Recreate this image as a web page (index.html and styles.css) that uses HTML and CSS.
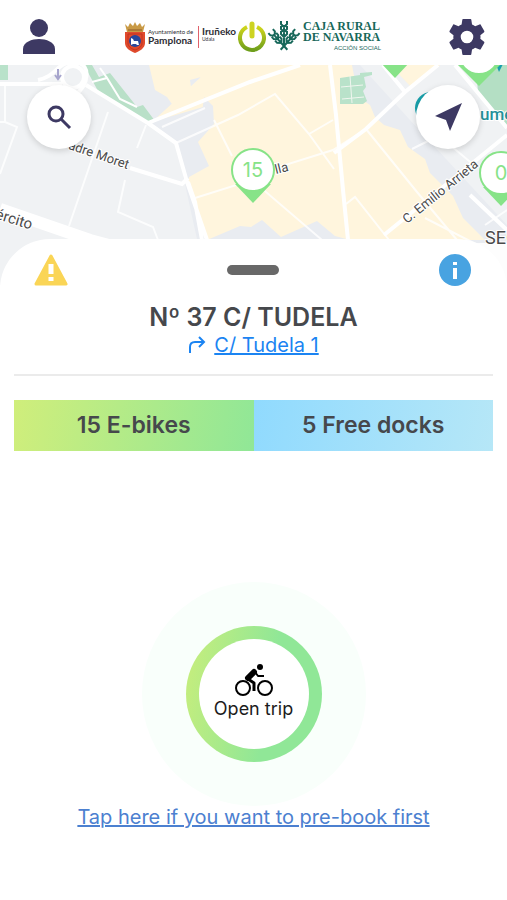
FILE: index.html
```html
<!DOCTYPE html>
<html lang="en">

<head>
    <meta charset="UTF-8">
    <meta name="viewport" content="width=device-width, initial-scale=1.0">
    <title>Station 37 - C/ Tudela</title>
    <link rel="stylesheet" href="styles.css">
</head>

<body>
    <header>
        <button class="icon-btn" aria-label="Profile">
            <svg width="34" height="36" viewBox="0 0 34 36" fill="currentColor">
                <circle cx="17" cy="9" r="9" />
                <path d="M1 35V30C1 23 10 20 17 20S33 23 33 30V35Z" />
            </svg>
        </button>

        <div class="logos">
            <svg class="crest" width="22" height="32" viewBox="0 0 22 32">
                <path d="M1 3L4 6L6 2L9 5L11 1L13 5L16 2L18 6L21 3L19 11H3Z" fill="#c99a45" />
                <path d="M4 9H18" stroke="#8d5a2b" stroke-width="1" />
                <path d="M1 11H21V22C21 27 16 30 11 32C6 30 1 27 1 22Z" fill="#e04a2c" />
                <path d="M4 13H18V22C18 26 14 28 11 29C8 28 4 26 4 22Z" fill="none" stroke="#c2331f" stroke-width="1" />
                <circle cx="11" cy="20" r="6" fill="#27479b" />
                <path d="M7 17L9 18L10 20L14 20L15 24H13L12 23H9L7 24Z" fill="#fff" />
            </svg>
            <div class="city">
                <span>Ayuntamiento de</span>
                <strong>Pamplona</strong>
            </div>
            <div class="city city-eu">
                <strong>Iruñeko</strong>
                <span>Udala</span>
            </div>
            <svg class="power" width="28" height="32" viewBox="0 0 28 32">
                <defs>
                    <linearGradient id="power" x1="0" y1="0" x2="0" y2="1">
                        <stop offset="0" stop-color="#cfd51c" />
                        <stop offset="1" stop-color="#6f9f1c" />
                    </linearGradient>
                </defs>
                <path d="M9 6A12 12 0 1 0 19 6" fill="none" stroke="url(#power)" stroke-width="4" />
                <path d="M14 3V15" stroke="#cdd322" stroke-width="5" stroke-linecap="round" />
            </svg>
            <svg class="wheat" width="28" height="26" viewBox="0 0 28 26" fill="none" stroke="#17685a">
                <defs>
                    <path id="ear" d="M14 4V25M11 0V3L14 6L17 3V0M11 5V8L14 11L17 8V5M11 10V13L14 16L17 13V10" />
                </defs>
                <use href="#ear" stroke-width="2" />
                <use href="#ear" stroke-width="2" transform="rotate(-42 14 25) translate(0 5)" />
                <use href="#ear" stroke-width="2" transform="rotate(42 14 25) translate(0 5)" />
            </svg>
            <div class="bank">
                <strong>CAJA RURAL</strong>
                <strong>DE NAVARRA</strong>
                <span>ACCIÓN SOCIAL</span>
            </div>
        </div>

        <button class="icon-btn" aria-label="Settings">
            <svg width="36" height="36" viewBox="2 2 20 20" fill="currentColor">
                <path d="M19.4 13c0-.3.1-.6.1-1s0-.7-.1-1l2.1-1.7c.2-.2.2-.4.1-.6l-2-3.5c-.1-.2-.4-.3-.6-.2l-2.5 1c-.5-.4-1.1-.7-1.7-1l-.4-2.6c0-.2-.2-.4-.5-.4h-4c-.2 0-.5.2-.5.4L9 5c-.6.3-1.2.6-1.7 1L4.9 5c-.2-.1-.5 0-.6.2l-2 3.500c-.1.2-.1.5.1.6L4.500 11c0 .3-.1.7-.1 1s0 .7.1 1l-2.100 1.700c-.2.2-.2.4-.1.6l2 3.500c.1.2.4.3.6.2l2.400-1c.5.4 1.100.7 1.700 1l.4 2.600c0 .2.2.4.5.4h4c.2 0 .5-.2.5-.4l.4-2.600c.6-.3 1.200-.6 1.700-1l2.500 1c.2.1.5 0 .6-.2l2-3.500c.1-.2.1-.5-.1-.6zM12 15.500a3.500 3.500 0 1 1 0-7 3.500 3.500 0 0 1 0 7z" />
            </svg>
        </button>
    </header>

    <section class="map">
        <svg class="map-canvas" viewBox="0 65 507 220" preserveAspectRatio="xMidYMin slice">
            <rect y="65" width="507" height="220" fill="#f0f2f4" />
            <path d="M88 65H360L410 120L507 225V285H207L176 143L148 123Z" fill="#e9ecf1" />

            <!-- built-up blocks -->
            <path d="M149 65L155 90L167 97L174 107L186 103L192 94L190 80L201 77L204 97L214 101L300 65ZM153 121L176 140L200 129L204 97L213 106L214 124L198 142L209 166L189 177L188 182L207 240L240 226L251 227L262 220L281 237L317 221L335 236L350 240H485L463 218L453 196L430 173L425 159L408 147L400 130L384 125L375 117L370 105L358 97L352 65H214Z" fill="#fff5dd" />
            <path d="M148 123L176 143L209 128L210 105Z" fill="#e9ecf1" />
            <path d="M390 65L412 88L440 65Z" fill="#fff5dd" />

            <!-- parks -->
            <path d="M0 65H8V80H0Z" fill="#b9e2ca" />
            <path d="M84 65L92 65L99 77L110 73L137 107L143 105L155 121L147 123L113 103L98 91Z" fill="#b9e0c8" />
            <path d="M340 78L360 75V73L372 72V75L364 77L366 87L363 91L367 101L363 104H340Z" fill="#b9e2ca" />
            <path d="M341 87L363 85M342 99L364 97M350 76L352 103" stroke="#f0f6ef" stroke-width="1" />
            <path d="M475 65H507V128L478 91Z" fill="#b4dfc4" />

            <!-- streets -->
            <g fill="none" stroke="#fff" stroke-width="2">
                <path d="M5 85V122L17 127L0 174M0 122L5 122M108 112L69 226M146 125L137 148M125 180L118 212L153 227L158 240" opacity=".8" />
                <path d="M176 143L238 115L275 94L309 134L334 169M214 120L232 156M309 134L333 120M250 176L333 150L366 129M195 198L252 180L322 240M346 204L355 197L389 240M366 129L417 192L457 240M412 149L430 140M450 145L475 166M425 218L507 260M162 127L205 108M485 225L507 210" opacity=".8" />
                <path d="M92 82L107 78L120 99L137 107M107 78L100 68" />
            </g>
            <g fill="none" stroke="#fff" stroke-width="4">
                <path d="M0 84H62M86 85L148 123L176 143L187 182L207 240M148 123L250 82L300 65M130 168L182 184L188 178M188 182L195 202L202 240" />
                <path d="M330 65L336 115L343 190L348 240M334 153L366 129L405 92L438 65M383 65L405 92M455 65L507 128M384 235L507 135M507 230L470 195" />
                <path d="M0 209L90 240L180 264" stroke-width="12" />
                <path d="M38 80C58 76 55 62 76 62C92 65 88 85 76 94" />
                <circle cx="73" cy="77" r="11" />
            </g>
            <path d="M430 243H507V285H430Z" fill="#fdfdfd" />
            <path d="M58 69V78M55 75L58 79L61 75" fill="none" stroke="#a7a5cd" stroke-width="2" />

            <g class="street-names">
                <text x="60" y="146" transform="rotate(19 60 146)">Padre Moret</text>
                <text class="wide" x="-17" y="215" transform="rotate(17 -17 215)">Ejército</text>
                <text x="276" y="174" transform="rotate(-14 276 174)">lla</text>
                <text x="407" y="224" transform="rotate(-39 407 224)">C. Emilio Arrieta</text>
                <text class="district" x="485" y="244">SEGUNDO</text>
                <text class="museum" x="480" y="120">umento</text>
            </g>
            <circle cx="431" cy="108" r="16" fill="#18a0ab" />
            <path d="M495 62H504L499 72Z" fill="#18a0ab" />

            <!-- station pins -->
            <g class="pins">
                <path d="M380 62H410L395 78Z" />
                <path d="M458 65L479 86L500 65Z" />
                <circle cx="479" cy="54" r="20" />
                <path d="M235 184L253 203L271 184Z" />
                <circle cx="253" cy="170" r="21" />
                <text x="253" y="177">15</text>
                <path d="M483 187L501 206L519 187Z" />
                <circle cx="501" cy="173" r="21" />
                <text x="501" y="180">0</text>
            </g>
        </svg>

        <div class="map-actions">
            <button class="round-btn" aria-label="Search">
                <svg width="26" height="26" viewBox="0 0 26 26" fill="none" stroke="currentColor" stroke-width="3">
                    <circle cx="10" cy="10" r="7" />
                    <path d="M15 15L24 24" />
                </svg>
            </button>
            <button class="round-btn" aria-label="My location">
                <svg width="28" height="28" viewBox="0 0 28 28" fill="currentColor">
                    <path d="M28 0L1 13L12 17L16 28Z" />
                </svg>
            </button>
        </div>
    </section>

    <main class="sheet">
        <div class="sheet-top">
            <button class="icon-btn" aria-label="Report a problem">
                <svg width="34" height="32" viewBox="0 0 34 32">
                    <path d="M17 2L32 30H2Z" fill="#fad556" stroke="#fad556" stroke-width="3" stroke-linejoin="round" />
                    <path d="M17 10V20M17 23V27" stroke="#fff" stroke-width="5" />
                </svg>
            </button>
            <div class="handle"></div>
            <button class="icon-btn" aria-label="Station info">
                <svg width="34" height="34" viewBox="0 0 34 34">
                    <circle cx="17" cy="17" r="16" fill="#48a3e1" />
                    <path d="M17 9V12M17 15V26" stroke="#fff" stroke-width="4" />
                </svg>
            </button>
        </div>

        <h1>Nº 37 C/ TUDELA</h1>
        <p class="address">
            <svg width="18" height="18" viewBox="0 0 18 18" fill="none" stroke="#1b84f2" stroke-width="2">
                <path d="M2 17V11Q2 6 7 6H16M11 1L16 6L11 11" />
            </svg>
            <a href="#">C/ Tudela 1</a>
        </p>

        <div class="stats">
            <div class="stat bikes">15 E-bikes</div>
            <div class="stat docks">5 Free docks</div>
        </div>

        <div class="trip">
            <div class="halo">
                <button class="trip-btn">
                    <span class="trip-inner">
                        <svg width="38" height="34" viewBox="0 0 38 34" fill="none" stroke="#000" stroke-linejoin="round">
                            <circle cx="8" cy="25" r="7" stroke-width="2" />
                            <circle cx="30" cy="25" r="7" stroke-width="2" />
                            <circle cx="25" cy="4" r="3" fill="#000" stroke="none" />
                            <path d="M19 9L13 15" stroke-width="6" stroke-linecap="round" />
                            <path d="M13 16L19 20V28" stroke-width="3" />
                            <path d="M20 9L23 13H29" stroke-width="2" />
                        </svg>
                        Open trip
                    </span>
                </button>
            </div>
            <a class="prebook" href="#">Tap here if you want to pre-book first</a>
        </div>
    </main>
</body>

</html>
```
FILE: styles.css
```css
/* General Reset */
* {
    margin: 0;
    padding: 0;
    box-sizing: border-box;
}

:root {
    --navy: #3d3963;
    --text-color: #46484c;
    --link-color: #1b84f2;
    --green: #90e797;
    --lime: #d0ee7b;
}

body {
    font-family: Inter, "Liberation Sans", sans-serif;
    background-color: #fff;
    color: var(--text-color);
    min-height: 100vh;
    overflow-x: hidden;
}

svg {
    display: block;
}

button {
    font-family: inherit;
    border: none;
    background: none;
    cursor: pointer;
}

.icon-btn {
    color: var(--navy);
}

/* Header */
header {
    display: flex;
    justify-content: space-between;
    align-items: center;
    height: 65px;
    padding: 8px 22px 0;
}

.logos {
    display: flex;
    align-items: center;
    color: #2c2c34;
}

.city {
    display: flex;
    flex-direction: column;
    width: 50px;
    margin-left: 2px;
    font-family: Lato, sans-serif;
    font-size: 6px;
    line-height: 7px;
    white-space: nowrap;
}

.city strong {
    font-size: 10px;
    line-height: 10px;
}

.city-eu {
    width: 40px;
    height: 22px;
    margin-left: 0;
    padding-left: 3px;
    border-left: 1px solid #e0616b;
}

.city-eu span {
    font-size: 5px;
}

.wheat {
    overflow: visible;
    margin: 0 5px 6px 4px;
}

.bank {
    display: flex;
    flex-direction: column;
    width: 78px;
    color: #17685a;
    font-family: "Liberation Serif", serif;
    font-size: 12px;
    line-height: 11px;
    white-space: nowrap;
}

.bank span {
    align-self: flex-end;
    font-family: "Liberation Sans", sans-serif;
    font-size: 6px;
    line-height: 10px;
}

/* Map */
.map {
    position: relative;
    height: 220px;
    overflow: hidden;
}

.map-canvas {
    width: 100%;
    height: 100%;
}

.street-names {
    font-family: Roboto, sans-serif;
    font-size: 13px;
    fill: #4a4a4a;
    stroke: #fff;
    stroke-width: 2px;
    paint-order: stroke;
}

.street-names .wide {
    font-size: 15px;
}

.street-names .district {
    font-size: 18px;
}

.street-names .museum {
    font-size: 17px;
    font-weight: 500;
    fill: #23909a;
}

.pins {
    fill: #87e388;
}

.pins circle {
    fill: #fff;
    stroke: #87e388;
    stroke-width: 2px;
}

.pins text {
    font-size: 20px;
    text-anchor: middle;
}

.map-actions {
    position: absolute;
    top: 20px;
    left: 27px;
    right: 27px;
    display: flex;
    justify-content: space-between;
}

.round-btn {
    display: flex;
    align-items: center;
    justify-content: center;
    width: 64px;
    height: 64px;
    border-radius: 50%;
    background-color: #fff;
    color: var(--navy);
    box-shadow: 0 2px 6px rgba(0, 0, 0, 0.15);
}

/* Bottom sheet */
.sheet {
    position: relative;
    margin-top: -46px;
    padding: 14px 14px 24px;
    border-radius: 50px 50px 0 0;
    background-color: #fff;
    text-align: center;
}

.sheet-top {
    display: flex;
    justify-content: space-between;
    align-items: center;
    padding: 0 21px 0 20px;
}

.handle {
    width: 52px;
    height: 10px;
    border-radius: 5px;
    background-color: #686868;
}

h1 {
    margin-top: 14px;
    font-size: 25px;
    font-weight: 600;
    line-height: 32px;
}

.address {
    display: flex;
    justify-content: center;
    align-items: center;
    gap: 8px;
    padding-bottom: 17px;
    border-bottom: 2px solid #ebebeb;
    font-size: 20px;
    line-height: 24px;
}

.address a {
    color: var(--link-color);
}

.stats {
    display: grid;
    grid-template-columns: 1fr 1fr;
    margin-top: 24px;
    font-size: 23px;
    font-weight: 600;
    line-height: 51px;
}

.bikes {
    background: linear-gradient(100deg, var(--lime), var(--green));
}

.docks {
    background: linear-gradient(100deg, #90dafe, #b6e7f7);
}

/* Trip button */
.trip {
    display: flex;
    flex-direction: column;
    align-items: center;
    margin-top: 131px;
}

.halo {
    display: flex;
    align-items: center;
    justify-content: center;
    width: 224px;
    height: 224px;
    border-radius: 50%;
    background-color: #f9fffb;
}

.trip-btn {
    padding: 13px;
    border-radius: 50%;
    background: linear-gradient(100deg, #c9ee7b, var(--green) 60%);
}

.trip-inner {
    display: flex;
    flex-direction: column;
    align-items: center;
    justify-content: center;
    width: 110px;
    height: 110px;
    padding-bottom: 4px;
    border-radius: 50%;
    background-color: #fff;
    color: #1c1c1c;
    font-size: 18px;
    line-height: 24px;
}

.prebook {
    color: #4c80d0;
    font-size: 20px;
    line-height: 22px;
}
```
